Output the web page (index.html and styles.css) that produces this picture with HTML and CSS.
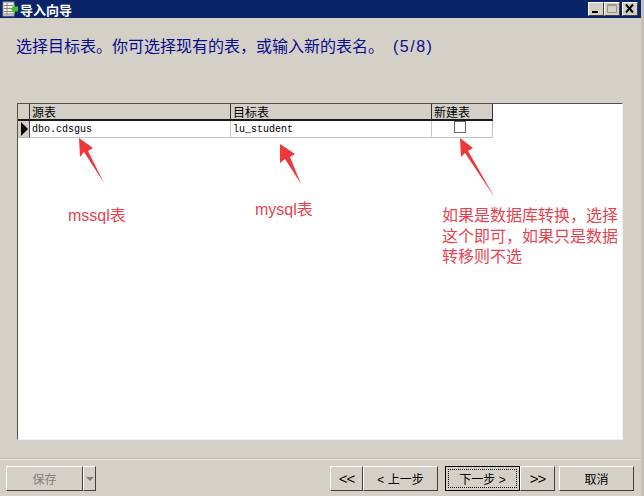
FILE: index.html
```html
<!DOCTYPE html>
<html lang="zh-CN">
<head>
    <meta charset="UTF-8">
    <title>导入向导</title>
    <link rel="stylesheet" href="styles.css">
</head>
<body>
<div class="wizard">
    <!-- title bar -->
    <div class="titlebar">
        <svg class="app-icon" width="16" height="16" viewBox="0 0 16 16">
            <rect x="1" y="1" width="11" height="14" fill="#f4f2ec" stroke="#8a8a80"/>
            <path d="M2 4.500h9M2 7.500h9M2 10.500h9M2 13h9M5 2v12" stroke="#8a8a80" fill="none"/>
            <path d="M9 8l4-5v2.500h3v5h-3V13z" fill="#3fbf2e"/>
        </svg>
        <span class="title-text">导入向导</span>
        <div class="win-buttons">
            <div class="win-btn"><svg width="14" height="12" viewBox="0 0 14 12"><rect x="3" y="8" width="6" height="2" fill="#000"/></svg></div>
            <div class="win-btn"><svg width="14" height="12" viewBox="0 0 14 12"><path d="M2.500 1.500h9v8h-9zM2 2.500h10" stroke="#9a968e" fill="none"/></svg></div>
            <div class="win-btn win-close"><svg width="14" height="12" viewBox="0 0 14 12"><path d="M3 1.500l7 8M10 1.500l-7 8" stroke="#000" stroke-width="2" fill="none"/></svg></div>
        </div>
    </div>

    <p class="prompt">选择目标表。你可选择现有的表，或输入新的表名。<span class="step-no"> (5/8)</span></p>

    <!-- table mapping -->
    <div class="panel">
        <div class="grid">
            <div class="head-cell"></div>
            <div class="head-cell">源表</div>
            <div class="head-cell">目标表</div>
            <div class="head-cell">新建表</div>
            <div class="row-marker"><svg width="7" height="14" viewBox="0 0 7 14"><path d="M0 0l7 7-7 7z" fill="#000"/></svg></div>
            <div class="data-cell">dbo.cdsgus</div>
            <div class="data-cell">lu_student</div>
            <div class="data-cell check-cell"><span class="checkbox"></span></div>
        </div>

        <!-- screenshot annotations -->
        <svg class="arrows" width="606" height="337" viewBox="17 103 606 337">
            <path d="M79 138L93 148 88 151 104 183 84 152 80 157z" fill="#f0373c"/>
            <path d="M280 144L295 154 290 157 301 184 285 159 280 163z" fill="#f0373c"/>
            <path d="M460 138L473 148 468 151 495 198 465 153 461 157z" fill="#f0373c"/>
        </svg>
        <span class="note note-mssql">mssql表</span>
        <span class="note note-mysql">mysql表</span>
        <span class="note note-new">如果是数据库转换，选择<br>这个即可，如果只是数据<br>转移则不选</span>
    </div>

    <!-- footer -->
    <div class="footer">
        <div class="split-btn">
            <button class="btn btn-save" disabled>保存</button>
            <button class="btn btn-drop" disabled><span class="caret"></span></button>
        </div>
        <div class="nav">
            <button class="btn btn-jump">&lt;&lt;</button>
            <button class="btn btn-step">&lt; 上一步</button>
            <button class="btn btn-step btn-default"><span class="focus-box">下一步 &gt;</span></button>
            <button class="btn btn-jump btn-last">&gt;&gt;</button>
            <button class="btn btn-step">取消</button>
        </div>
    </div>
</div>
</body>
</html>
```

FILE: styles.css
```css
body {
    margin: 0;
    background: #d4d0c8;
    font-family: "Liberation Sans", "Noto Sans CJK SC", sans-serif;
}

.wizard {
    width: 644px;
    height: 496px;
    overflow: hidden;
    box-sizing: border-box;
    background: #d4d0c8;
    border-right: 3px solid #c4c0b8;
    display: flex;
    flex-direction: column;
}

/* title bar */
.titlebar {
    height: 18px;
    flex: none;
    background: #0a246a;
    display: flex;
    align-items: center;
    padding: 0 3px 0 2px;
}

.app-icon {
    flex: none;
}

.title-text {
    margin-left: 2px;
    color: #fff;
    font-size: 13px;
    font-weight: 700;
}

.win-buttons {
    margin-left: auto;
    display: flex;
    gap: 0;
}

.win-btn {
    width: 16px;
    height: 14px;
    box-sizing: border-box;
    background: #d4d0c8;
    border: 1px solid;
    border-color: #fff #404040 #404040 #fff;
    display: flex;
    align-items: center;
    justify-content: center;
}

.win-close {
    margin-left: 2px;
}

.prompt {
    margin: 17px 0 0 16px;
    height: 24px;
    line-height: 24px;
    font-size: 16px;
    color: #0a0a8c;
    white-space: nowrap;
}

.step-no {
    letter-spacing: 1.500px;
    word-spacing: 3px;
}

/* table mapping */
.panel {
    position: relative;
    flex: none;
    width: 606px;
    height: 337px;
    margin: 44px 0 0 17px;
    box-sizing: border-box;
    background: #fff;
    border: 1px solid;
    border-color: #55524c #f2f0ea #f2f0ea #55524c;
}

.grid {
    display: grid;
    grid-template-columns: 12px 201px 201px 61px;
    grid-template-rows: 17px 17px;
    width: 475px;
}

.head-cell {
    box-sizing: border-box;
    background: #d4d0c8;
    border-right: 1px solid #333;
    border-bottom: 2px solid #1a1a1a;
    padding-left: 2px;
    font-size: 12px;
    line-height: 18px;
    color: #000;
    overflow: hidden;
}

.row-marker {
    box-sizing: border-box;
    background: #d4d0c8;
    border-right: 1px solid #444;
    border-bottom: 1px solid #bbb;
    display: flex;
    align-items: center;
    padding-left: 3px;
}

.data-cell {
    box-sizing: border-box;
    border-right: 1px solid #c4c4c4;
    border-bottom: 1px solid #c4c4c4;
    padding-left: 2px;
    font-family: "Liberation Mono", monospace;
    font-size: 10px;
    line-height: 18px;
    color: #000;
}

.check-cell {
    display: flex;
    justify-content: center;
    padding: 0 4px 0 0;
}

.checkbox {
    box-sizing: border-box;
    width: 12px;
    height: 12px;
    background: #fff;
    border: 1px solid #666;
}

/* annotations */
.arrows {
    position: absolute;
    left: -1px;
    top: -1px;
}

.note {
    position: absolute;
    color: #e8424f;
    font-size: 16px;
    white-space: nowrap;
}

.note-mssql {
    left: 50px;
    top: 101px;
    line-height: 22px;
}

.note-mysql {
    left: 237px;
    top: 95px;
    line-height: 22px;
}

.note-new {
    left: 424px;
    top: 102px;
    line-height: 20.500px;
}

/* footer */
.footer {
    flex: 1;
    margin-top: 18px;
    border-top: 1px solid #bfbbb3;
    box-shadow: inset 0 1px 0 #eeece6;
    display: flex;
    justify-content: space-between;
    padding: 7px 7px 0 6px;
    box-sizing: border-box;
}

.split-btn,
.nav {
    display: flex;
    height: 25px;
}

.btn {
    box-sizing: border-box;
    height: 25px;
    margin: 0;
    padding: 0;
    background: #d4d0c8;
    border: 1px solid;
    border-color: #fff #404040 #404040 #fff;
    font-family: inherit;
    font-size: 12px;
    color: #000;
    display: flex;
    align-items: center;
    justify-content: center;
}

.btn:disabled {
    color: #808080;
}

.btn-save {
    width: 77px;
}

.btn-drop {
    width: 13px;
}

.caret {
    border-left: 4px solid transparent;
    border-right: 4px solid transparent;
    border-top: 4px solid #808080;
}

.btn-jump {
    width: 33px;
    font-size: 15px;
    letter-spacing: -1px;
}

.btn-step {
    width: 75px;
}

.btn-step:nth-child(2) {
    margin-right: 7px;
}

.btn-last {
    width: 35px;
    margin-right: 4px;
}

.btn-default {
    border: 1px solid #000;
    padding: 2px;
}

.focus-box {
    flex: 1;
    align-self: stretch;
    border: 1px dotted #000;
    display: flex;
    align-items: center;
    justify-content: center;
}
```
